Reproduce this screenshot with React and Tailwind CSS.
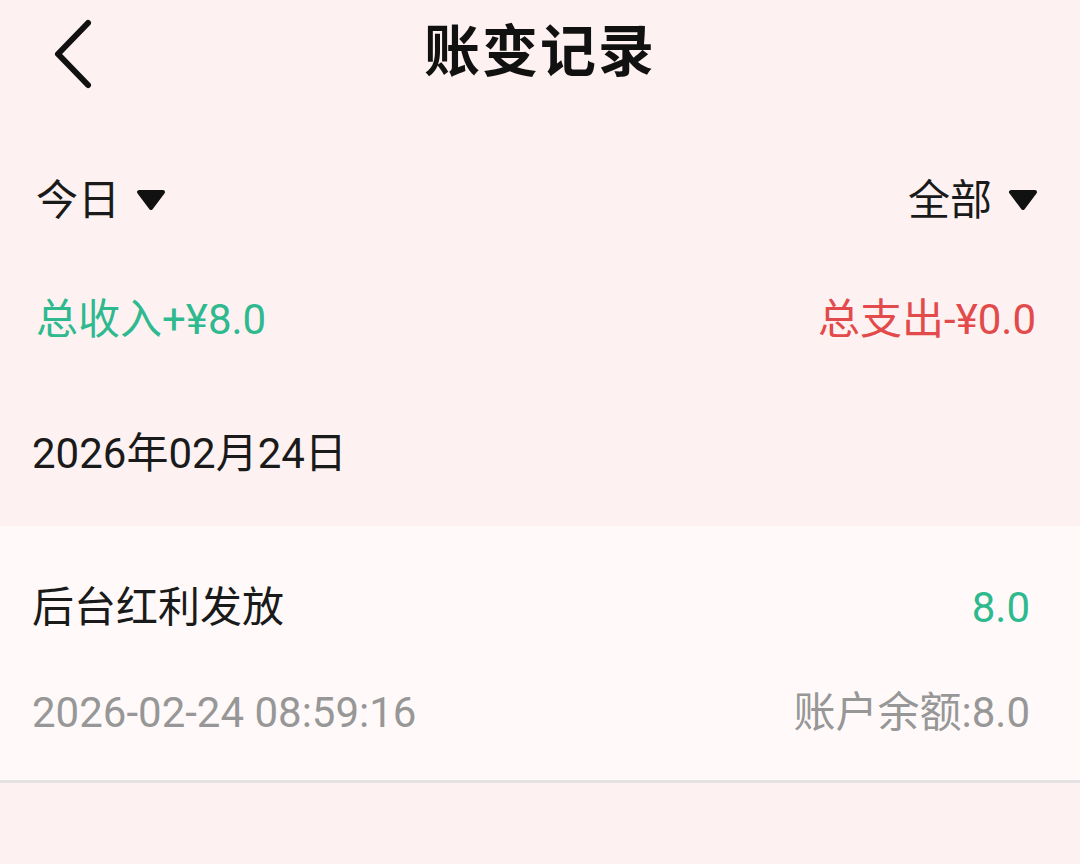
import React from 'react';

const Caret = () => (
  <svg width="30" height="22" viewBox="0 0 30 22" className="ml-[16px]">
    <path d="M3 3 L27 3 L15 19 Z" fill="#111" stroke="#111" strokeWidth="4" strokeLinejoin="round" />
  </svg>
);

const App = () => {
  const font = { fontFamily: 'Roboto, "Noto Sans CJK SC", sans-serif' };

  return (
    <div className="min-h-[864px] w-[1080px] bg-[#fdf2f1] text-[#1a1a1a]" style={font}>
      {/* header */}
      <div className="relative h-[104px] flex items-center justify-center">
        <button className="absolute left-[50px] top-[18px]">
          <svg width="48" height="72" viewBox="0 0 48 72">
            <path d="M38 5 L8 36 L38 67" fill="none" stroke="#111" strokeWidth="6" strokeLinecap="round" strokeLinejoin="round" />
          </svg>
        </button>
        <h1 className="text-[56px] font-bold tracking-[2px] text-[#111]">账变记录</h1>
      </div>

      {/* filters */}
      <div className="mt-[48px] h-[96px] pl-[36px] pr-[42px] flex items-center justify-between text-[42px]">
        <div className="flex items-center">
          <span>今日</span>
          <Caret />
        </div>
        <div className="flex items-center">
          <span>全部</span>
          <Caret />
        </div>
      </div>

      {/* totals */}
      <div className="h-[140px] px-[38px] pt-[40px] flex justify-between text-[42px]">
        <span className="text-[#2eb98f] -ml-[2px]">总收入+¥8.0</span>
        <span className="text-[#e24a4b] mr-[6px]">总支出-¥0.0</span>
      </div>

      {/* date */}
      <div className="h-[138px] px-[32px] pt-[34px] text-[42px]">2026年02月24日</div>

      {/* record */}
      <div className="bg-[#fffaf9] border-b-[3px] border-[#e4e2e2] h-[257px] px-[32px] pt-[50px]">
        <div className="flex justify-between items-center text-[42px]">
          <span>后台红利发放</span>
          <span className="text-[#2eb98f] mr-[18px]">8.0</span>
        </div>
        <div className="mt-[42px] flex justify-between items-center text-[42px] text-[#979797]">
          <span>2026-02-24 08:59:16</span>
          <span className="mr-[18px]">账户余额:8.0</span>
        </div>
      </div>
    </div>
  );
};

export default App;
